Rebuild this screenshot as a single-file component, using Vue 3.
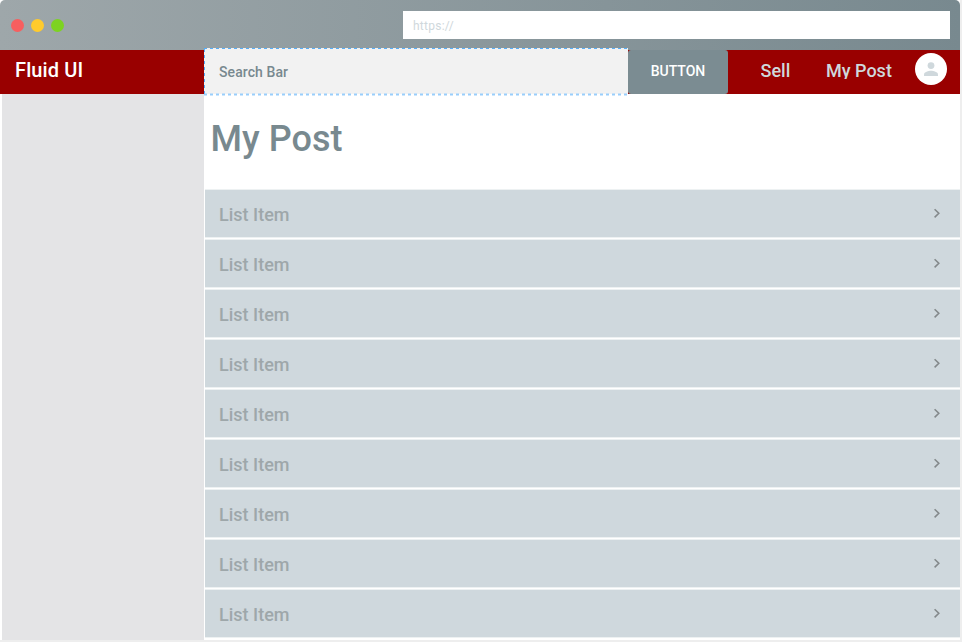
<script setup>
const items = Array.from({ length: 9 }, (_, i) => ({ id: i, label: 'List Item' }))
</script>

<template>
  <div class="page">
    <div class="window">
      <header class="chrome">
        <div class="lights">
          <i class="light red"></i>
          <i class="light yellow"></i>
          <i class="light green"></i>
        </div>
        <div class="address"><span>https://</span></div>
      </header>
      <nav class="navbar">
        <div class="brand"><span>Fluid UI</span></div>
        <div class="search">
          <span>Search Bar</span>
          <svg class="selection" width="426" height="48" viewBox="0 0 426 48" fill="none" stroke="#55aefa" stroke-dasharray="3 3">
            <path d="M0 .5H425" />
            <path d="M.5 1V47" />
            <path d="M0 46.5H425" stroke-width="2" stroke="#99cefb" />
          </svg>
        </div>
        <button class="action"><span>BUTTON</span></button>
        <a class="link sell">Sell</a>
        <a class="link post">My Post</a>
        <svg class="avatar" width="32" height="32" viewBox="0 0 32 32">
          <circle cx="16" cy="16" r="16" fill="#fff" />
          <circle cx="16" cy="12.6" r="3.4" fill="#cfd8dc" />
          <path d="M9 23v-1.6c0-2.4 4.6-3.7 7-3.7s7 1.3 7 3.7V23z" fill="#cfd8dc" />
        </svg>
      </nav>
      <div class="body">
        <aside class="sidebar"></aside>
        <main class="content">
          <h1>My Post</h1>
          <ul class="list">
            <li v-for="item in items" :key="item.id">
              <span>{{ item.label }}</span>
              <svg width="8" height="10" viewBox="0 0 8 10" fill="none" stroke="#84898b" stroke-width="1.6">
                <path d="M1.6 1.2L5.8 5.3L1.6 9.4" />
              </svg>
            </li>
          </ul>
        </main>
      </div>
    </div>
  </div>
</template>

<style>
body { background: #eee; overflow: hidden; }
</style>

<style scoped>
.page {
  width: 962px;
  height: 642px;
  overflow: hidden;
  font-family: Roboto, "Liberation Sans", sans-serif;
  font-weight: 500;
  white-space: nowrap;
}
.window {
  width: 960px;
  height: 640px;
  overflow: hidden;
  background: #fff;
}
.chrome {
  display: flex;
  justify-content: space-between;
  box-sizing: border-box;
  height: 50px;
  padding: 11px 10px 11px 11px;
  border-radius: 5px 5px 0 0;
  background: linear-gradient(90deg, #9ea7aa, #78898f);
}
.lights { display: flex; gap: 7px; padding-top: 7.5px; }
.light { width: 13px; height: 13px; border-radius: 50%; }
.red { background: #f75f5f; }
.yellow { background: #ffcb2d; }
.green { background: #7dd321; }
.address {
  box-sizing: border-box;
  width: 547px;
  height: 28px;
  padding-left: 10px;
  background: #fff;
  color: #cfd8dc;
  font-size: 12px;
  font-weight: 400;
  letter-spacing: .25px;
  line-height: 30px;
}
.navbar {
  display: flex;
  height: 44px;
  background: #900;
}
.brand {
  width: 189px;
  padding-left: 15px;
  color: #fff;
  font-size: 20px;
  letter-spacing: .12px;
  line-height: 40px;
}
.search {
  position: relative;
  box-sizing: border-box;
  width: 424px;
  height: 46px;
  margin-top: -2px;
  padding-left: 15px;
  background: #f2f2f2;
  color: #78898f;
  font-size: 14px;
  letter-spacing: .08px;
  line-height: 48px;
}
.selection { position: absolute; left: 0; top: 0; }
.action {
  width: 100px;
  height: 44px;
  padding: 0 0 2px;
  border: 0;
  border-radius: 3px;
  background: #7b8c92;
  color: #fff;
  font: inherit;
  font-size: 14px;
  line-height: 42px;
}
.link {
  height: 29px;
  overflow: hidden;
  color: #cfd8dc;
  font-size: 18px;
  line-height: 42px;
}
.sell { width: 65.5px; margin-left: 32.5px; }
.post { width: 89px; }
.avatar { margin-top: 3px; }
.body { display: flex; height: 546px; padding-left: 2px; }
.sidebar { width: 202px; background: #e4e4e6; }
.content { width: 756px; }
h1 {
  height: 95px;
  margin: 0;
  padding-left: 6.5px;
  color: #78898f;
  font-size: 36px;
  font-weight: 500;
  letter-spacing: .06px;
  line-height: 90px;
}
.list {
  margin: 0;
  padding: 0 0 0 1px;
  list-style: none;
}
li {
  display: flex;
  align-items: center;
  justify-content: space-between;
  box-sizing: border-box;
  height: 49px;
  margin-bottom: 1px;
  padding: 0 19px 0 14px;
  border: solid #edf1f2;
  border-width: 1px 0;
  background: #cfd8dd;
  color: #9ea7aa;
  font-size: 18px;
}
li span { padding-top: 2px; }
li svg { margin-bottom: 1px; }
</style>
